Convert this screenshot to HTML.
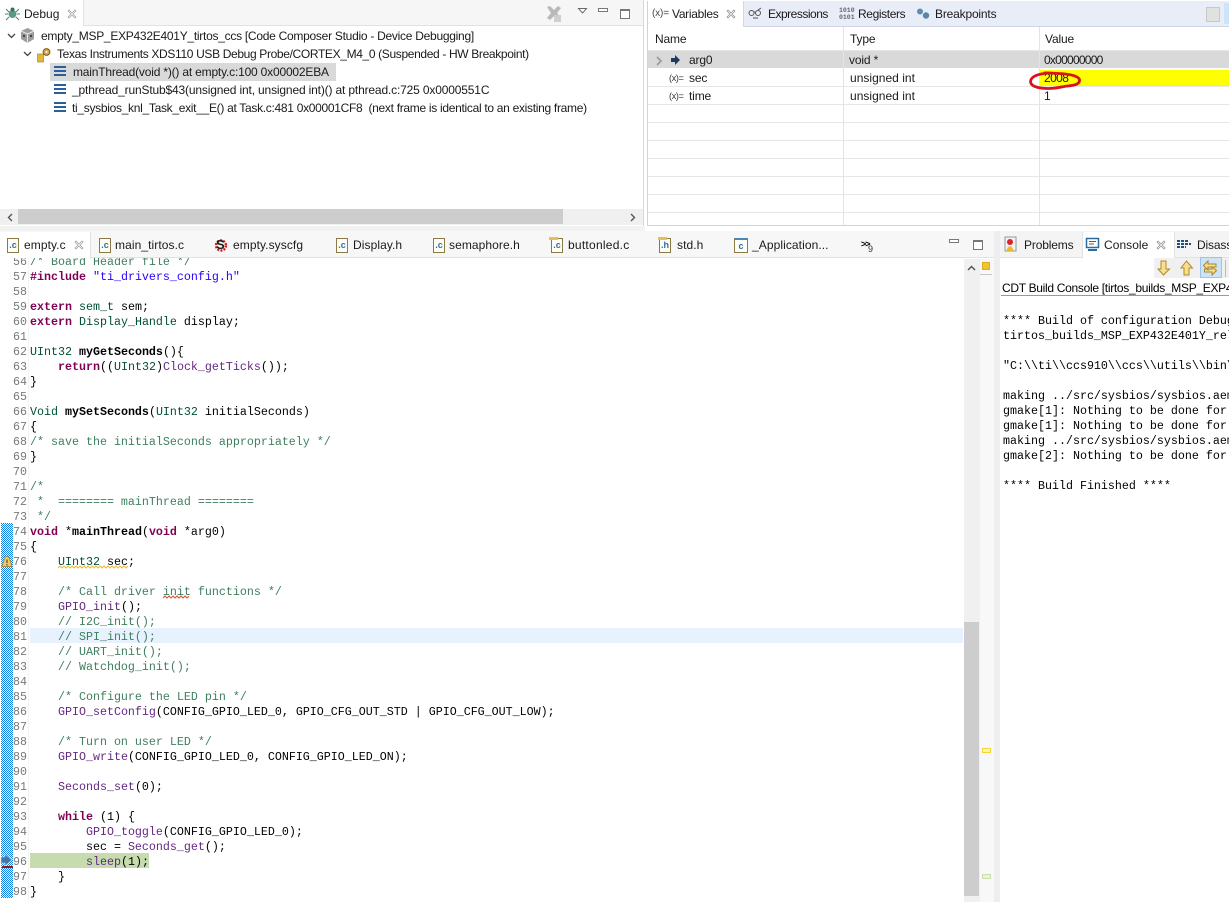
<!DOCTYPE html>
<html><head><meta charset="utf-8"><style>
html,body{margin:0;padding:0;background:#fff}
#r{position:relative;width:1229px;height:902px;overflow:hidden;background:#fff;font-family:"Liberation Sans",sans-serif;font-size:12px;color:#1a1a1a}
.a{position:absolute}
.t{position:absolute;white-space:nowrap;font-size:12px;line-height:16px;letter-spacing:-.15px;color:#1a1a1a}
.g{letter-spacing:.08px}
.m{position:absolute;white-space:pre;font-family:"Liberation Mono",monospace;font-size:11.67px;line-height:15px;color:#000}
.n{position:absolute;left:0;width:27px;text-align:right;white-space:pre;font-family:"Liberation Mono",monospace;font-size:11.67px;line-height:15px;color:#787878}
.c{color:#3f7f5f}.k{color:#7f0055;font-weight:bold}.s{color:#2a00ff}.y{color:#005032}.f{color:#642880}.b{font-weight:bold}
.h{position:absolute;height:1px;background:#e6e6e6}.v{position:absolute;width:1px;background:#e3e3e3}
.fi{position:absolute;width:10px;height:13px;background:#fdfdf5;border:1px solid #8b7a45;color:#2a6fb0;font:bold 9px/13px "Liberation Sans",sans-serif;text-align:center}
svg{position:absolute;overflow:visible}
</style></head><body><div id="r">

<!-- Debug panel -->
<div class="a" style="left:0;top:0;width:643px;height:226px;background:#fff;border-right:1px solid #d8d8d8"></div>
<div class="a" style="left:0;top:0;width:643px;height:25px;background:#f6f6f6;border-bottom:1px solid #e2e2e2"></div>
<div class="a" style="left:0;top:0;width:83px;height:26px;background:#fff;border-right:1px solid #e2e2e2"></div>
<svg style="left:5px;top:6px" width="15" height="15"><circle cx="7.500" cy="8" r="4" fill="#5a9a82"/><circle cx="7.500" cy="3.500" r="2" fill="#3d6d5b"/><path d="M1 3l3 3M14 3l-3 3M0 8h3M12 8h3M1 14l3-3M14 14l-3-3" stroke="#5b7d6d" stroke-width="1" fill="none"/></svg>
<div class="t" style="left:24px;top:6px;letter-spacing:0">Debug</div>
<svg style="left:68px;top:10px" width="9" height="9"><path d="M1 0l3 3 3-3 1 1-3 3 3 3-1 1-3-3-3 3-1-1 3-3-3-3z" fill="#fff" stroke="#9a9a9a" stroke-width=".7"/></svg>
<svg style="left:546px;top:5px" width="16" height="17"><path d="M1 2l3-1 4 4 4-4 3 2-4 5 4 5-3 2-4-4-4 4-3-2 4-5z" fill="#b9b9b9"/><rect x="8" y="10" width="7" height="7" fill="#cfcfcf"/></svg>
<svg style="left:578px;top:8px" width="10" height="7"><path d="M.5.5h8l-4 4.500z" fill="#fff" stroke="#6a6a6a"/></svg>
<div class="a" style="left:598px;top:8px;width:8px;height:2px;border:1px solid #777;background:#fff"></div>
<div class="a" style="left:620px;top:9px;width:8px;height:7px;border:1px solid #777;border-top-width:2px;background:#fff"></div>

<svg style="left:7px;top:33px" width="9" height="6"><path d="M1 1l3.500 3.500L8 1" stroke="#444" stroke-width="1.300" fill="none"/></svg>
<svg style="left:20px;top:28px" width="15" height="15"><path d="M7.500 0l6.500 3v8l-6.500 4L1 11V3z" fill="#9c9c9c"/><path d="M7.500 6v9M1 3l6.500 3L14 3" stroke="#e8e8e8" fill="none"/><circle cx="4" cy="8" r="1.200" fill="#444"/><circle cx="11" cy="8" r="1.200" fill="#444"/></svg>
<div class="t" style="left:41px;top:28px;letter-spacing:-.27px">empty_MSP_EXP432E401Y_tirtos_ccs [Code Composer Studio - Device Debugging]</div>
<svg style="left:23px;top:51px" width="9" height="6"><path d="M1 1l3.500 3.500L8 1" stroke="#444" stroke-width="1.300" fill="none"/></svg>
<svg style="left:37px;top:47px" width="15" height="15"><rect x="0.500" y="7" width="6" height="8" fill="#e2b83a" stroke="#94772a" stroke-width=".6"/><circle cx="9.500" cy="5" r="3.400" fill="#d9a441" stroke="#7a5a1f"/><circle cx="9.500" cy="5" r="1" fill="#fff"/></svg>
<div class="t" style="left:57px;top:46px;letter-spacing:-.35px">Texas Instruments XDS110 USB Debug Probe/CORTEX_M4_0 (Suspended - HW Breakpoint)</div>
<div class="a" style="left:50px;top:63px;width:286px;height:18px;background:#d9d9d9"></div>
<div class="a" style="left:54px;top:66px;width:12px;height:2px;background:#2a6099;box-shadow:0 4px 0 #2a6099,0 8px 0 #2a6099"></div>
<div class="a" style="left:54px;top:84px;width:12px;height:2px;background:#2a6099;box-shadow:0 4px 0 #2a6099,0 8px 0 #2a6099"></div>
<div class="a" style="left:54px;top:102px;width:12px;height:2px;background:#2a6099;box-shadow:0 4px 0 #2a6099,0 8px 0 #2a6099"></div>
<div class="t" style="left:73px;top:64px;letter-spacing:-.19px">mainThread(void *)() at empty.c:100 0x00002EBA</div>
<div class="t" style="left:72px;top:82px;letter-spacing:-.16px">_pthread_runStub$43(unsigned int, unsigned int)() at pthread.c:725 0x0000551C</div>
<div class="t" style="left:72px;top:100px;letter-spacing:-.3px">ti_sysbios_knl_Task_exit__E() at Task.c:481 0x00001CF8&nbsp; (next frame is identical to an existing frame)</div>

<!-- debug scrollbar -->
<div class="a" style="left:0;top:209px;width:643px;height:16px;background:#f0f0f0"></div>
<div class="a" style="left:18px;top:209px;width:545px;height:15px;background:#cdcdcd"></div>
<svg style="left:7px;top:213px" width="7" height="9"><path d="M5 1L1.500 4.500 5 8" stroke="#555" stroke-width="1.400" fill="none"/></svg>
<svg style="left:630px;top:213px" width="7" height="9"><path d="M1 1l3.500 3.500L1 8" stroke="#555" stroke-width="1.400" fill="none"/></svg>
<div class="a" style="left:0;top:226px;width:1229px;height:5px;background:#f2f2f2"></div>

<!-- Variables panel -->
<div class="a" style="left:645px;top:0;width:584px;height:232px;background:#fff"></div>
<div class="a" style="left:647px;top:1px;width:582px;height:25px;background:#e8edf7;border-bottom:1px solid #cfd6e6"></div>
<div class="a" style="left:648px;top:1px;width:95px;height:26px;background:#fff;border-right:1px solid #cfd6e6"></div>
<div class="a" style="left:647px;top:1px;width:1px;height:224px;background:#cfd3de"></div>
<div class="a" style="left:647px;top:225px;width:582px;height:1px;background:#cfd3de"></div>
<div class="t" style="left:652px;top:6px;font-size:10px;color:#444">(x)=</div>
<div class="t" style="left:672px;top:6px;letter-spacing:-.3px">Variables</div>
<svg style="left:727px;top:10px" width="9" height="9"><path d="M1 0l3 3 3-3 1 1-3 3 3 3-1 1-3-3-3 3-1-1 3-3-3-3z" fill="#fff" stroke="#8a8a8a" stroke-width=".7"/></svg>
<svg style="left:748px;top:7px" width="15" height="14"><circle cx="3.500" cy="6" r="2.500" fill="none" stroke="#555"/><circle cx="10" cy="6" r="2.500" fill="none" stroke="#555"/><path d="M6 5h1.500M10 3l3-2M5 11h5" stroke="#555" fill="none"/></svg>
<div class="t" style="left:768px;top:6px;letter-spacing:-.5px">Expressions</div>
<div class="t" style="left:839px;top:7px;font:bold 6.500px/7px 'Liberation Mono',monospace;letter-spacing:0;color:#666">1010<br>0101</div>
<div class="t" style="left:858px;top:6px;letter-spacing:-.38px">Registers</div>
<svg style="left:916px;top:8px" width="14" height="14"><circle cx="4" cy="3.500" r="3" fill="#5d8db0"/><circle cx="10" cy="7.500" r="3.200" fill="#5a87a8"/></svg>
<div class="t" style="left:935px;top:6px;letter-spacing:-.18px">Breakpoints</div>
<div class="a" style="left:1206px;top:7px;width:12px;height:13px;background:#dfe2df;border:1px solid #c8c8c8"></div>
<div class="a" style="left:1224px;top:3px;width:5px;height:21px;background:#cde3f7"></div>

<div class="t" style="left:655px;top:31px">Name</div>
<div class="t" style="left:850px;top:31px">Type</div>
<div class="t" style="left:1045px;top:31px">Value</div>
<div class="a" style="left:648px;top:51px;width:581px;height:17px;background:#d9d9d9"></div>
<div class="a" style="left:1039px;top:70px;width:190px;height:16px;background:#ffff00"></div>
<div class="h" style="left:648px;top:50px;width:581px"></div>
<div class="h" style="left:648px;top:86px;width:581px"></div>
<div class="h" style="left:648px;top:104px;width:581px"></div>
<div class="h" style="left:648px;top:122px;width:581px"></div>
<div class="h" style="left:648px;top:140px;width:581px"></div>
<div class="h" style="left:648px;top:158px;width:581px"></div>
<div class="h" style="left:648px;top:176px;width:581px"></div>
<div class="h" style="left:648px;top:194px;width:581px"></div>
<div class="h" style="left:648px;top:212px;width:581px"></div>
<div class="v" style="left:843px;top:27px;height:198px"></div>
<div class="v" style="left:1039px;top:27px;height:198px"></div>
<svg style="left:656px;top:56px" width="7" height="10"><path d="M1 1l4 4-4 4" stroke="#999" stroke-width="1.600" fill="none"/></svg>
<svg style="left:671px;top:55px" width="10" height="10"><path d="M0 3h4V0l5 5-5 5V7H0z" fill="#1f3a5c"/></svg>
<div class="t" style="left:689px;top:52px">arg0</div>
<div class="t" style="left:849px;top:52px">void *</div>
<div class="t" style="left:1044px;top:52px;letter-spacing:-.75px">0x00000000</div>
<div class="t" style="left:669px;top:70px;font-size:9px;color:#333;letter-spacing:-.3px">(x)=</div>
<div class="t" style="left:689px;top:70px">sec</div>
<div class="t" style="left:850px;top:70px;letter-spacing:.02px">unsigned int</div>
<div class="t" style="left:1044px;top:70px;letter-spacing:-.6px">2008</div>
<div class="t" style="left:669px;top:88px;font-size:9px;color:#333;letter-spacing:-.3px">(x)=</div>
<div class="t" style="left:689px;top:88px">time</div>
<div class="t" style="left:850px;top:88px;letter-spacing:.02px">unsigned int</div>
<div class="t" style="left:1044px;top:88px">1</div>
<svg style="left:1028px;top:70px" width="60" height="22"><path d="M16 3.500C9 4.500 3 7 2.500 11.500c0 4.500 7 7 18 7 9 0 14-2 19-2.500 5-.5 11-1 12-5 1-5-10-7-21-7.500-5 0-10-1-14-.5" fill="none" stroke="#d8121f" stroke-width="2.800" stroke-linecap="round"/></svg>

<!-- Editor tab bar -->
<div class="a" style="left:0;top:231px;width:994px;height:27px;background:#f7f7f7;border-bottom:1px solid #e2e2e2;box-sizing:border-box"></div>
<div class="a" style="left:0;top:232px;width:90px;height:27px;background:#fff;border-right:1px solid #e2e2e2"></div>
<div class="fi" style="left:7px;top:238px">.c</div>
<div class="t g" style="left:24px;top:237px">empty.c</div>
<svg style="left:75px;top:241px" width="9" height="9"><path d="M1 0l3 3 3-3 1 1-3 3 3 3-1 1-3-3-3 3-1-1 3-3-3-3z" fill="#fff" stroke="#9a9a9a" stroke-width=".7"/></svg>
<div class="fi" style="left:99px;top:238px">.c</div>
<div class="t g" style="left:115px;top:237px">main_tirtos.c</div>
<svg style="left:215px;top:238px" width="12" height="15"><circle cx="6" cy="7.500" r="5" fill="none" stroke="#c8201e" stroke-width="2.400" stroke-dasharray="2 1.200"/></svg>
<div class="t" style="left:216px;top:237px;font:bold 13px/16px 'Liberation Sans',sans-serif;color:#1a1a1a;letter-spacing:0">S</div>
<div class="t g" style="left:233px;top:237px">empty.syscfg</div>
<div class="fi" style="left:336px;top:238px">.c</div>
<div class="t g" style="left:353px;top:237px">Display.h</div>
<div class="fi" style="left:433px;top:238px">.c</div>
<div class="t g" style="left:449px;top:237px">semaphore.h</div>
<div class="fi" style="left:551px;top:238px">.c</div>
<div class="a" style="left:549px;top:237px;width:9px;height:3px;background:#e2c05c"></div>
<div class="t g" style="left:568px;top:237px;letter-spacing:.25px">buttonled.c</div>
<div class="fi" style="left:659px;top:238px">.h</div>
<div class="a" style="left:658px;top:237px;width:9px;height:3px;background:#e2c05c"></div>
<div class="t g" style="left:677px;top:237px">std.h</div>
<div class="fi" style="left:734px;top:238px;width:12px;border-top:2px solid #4a86b8;height:12px">c</div>
<div class="t g" style="left:752px;top:237px">_Application...</div>
<div class="t" style="left:861px;top:236px;font-size:9px;font-weight:bold;color:#000;letter-spacing:-1px">&gt;&gt;</div>
<div class="t" style="left:868px;top:241px;font-size:9px;color:#333">9</div>
<div class="a" style="left:949px;top:239px;width:8px;height:2px;border:1px solid #777;background:#fff"></div>
<div class="a" style="left:973px;top:240px;width:8px;height:7px;border:1px solid #777;border-top-width:2px;background:#fff"></div>

<!-- Editor gutter -->
<svg style="left:1px;top:523px" width="12" height="375" shape-rendering="crispEdges"><defs><pattern id="d" width="2" height="2" patternUnits="userSpaceOnUse"><rect width="2" height="2" fill="#fff"/><rect width="1" height="1" fill="#0f82e6"/><rect x="1" y="1" width="1" height="1" fill="#0f82e6"/></pattern></defs><rect width="12" height="375" fill="url(#d)"/></svg>
<div class="a" style="left:28px;top:259px;width:1px;height:643px;background:#f3f3f3"></div>

<!-- highlight lines -->
<div class="a" style="left:30px;top:628px;width:933px;height:15px;background:#e8f2fe"></div>
<div class="a" style="left:30px;top:853px;width:119px;height:15px;background:#c6dbae"></div>

<div class="a" id="code" style="left:0;top:1px;width:963px;height:901px;overflow:hidden;clip-path:inset(257px 0 0 0)">
<div class="n" style="top:254px">56</div><div class="m c" style="left:30px;top:254px">/* Board Header file */</div>
<div class="n" style="top:269px">57</div><div class="m" style="left:30px;top:269px"><span class="k">#include</span> <span class="s">"ti_drivers_config.h"</span></div>
<div class="n" style="top:284px">58</div>
<div class="n" style="top:299px">59</div><div class="m" style="left:30px;top:299px"><span class="k">extern</span> <span class="y">sem_t</span> sem;</div>
<div class="n" style="top:314px">60</div><div class="m" style="left:30px;top:314px"><span class="k">extern</span> <span class="y">Display_Handle</span> display;</div>
<div class="n" style="top:329px">61</div>
<div class="n" style="top:344px">62</div><div class="m" style="left:30px;top:344px"><span class="y">UInt32</span> <span class="b">myGetSeconds</span>(){</div>
<div class="n" style="top:359px">63</div><div class="m" style="left:30px;top:359px">    <span class="k">return</span>((<span class="y">UInt32</span>)<span class="f">Clock_getTicks</span>());</div>
<div class="n" style="top:374px">64</div><div class="m" style="left:30px;top:374px">}</div>
<div class="n" style="top:389px">65</div>
<div class="n" style="top:404px">66</div><div class="m" style="left:30px;top:404px"><span class="y">Void</span> <span class="b">mySetSeconds</span>(<span class="y">UInt32</span> initialSeconds)</div>
<div class="n" style="top:419px">67</div><div class="m" style="left:30px;top:419px">{</div>
<div class="n" style="top:434px">68</div><div class="m c" style="left:30px;top:434px">/* save the initialSeconds appropriately */</div>
<div class="n" style="top:449px">69</div><div class="m" style="left:30px;top:449px">}</div>
<div class="n" style="top:464px">70</div>
<div class="n" style="top:479px">71</div><div class="m c" style="left:30px;top:479px">/*</div>
<div class="n" style="top:494px">72</div><div class="m c" style="left:30px;top:494px"> *  ======== mainThread ========</div>
<div class="n" style="top:509px">73</div><div class="m c" style="left:30px;top:509px"> */</div>
<div class="n" style="top:524px">74</div><div class="m" style="left:30px;top:524px"><span class="k">void</span> *<span class="b">mainThread</span>(<span class="k">void</span> *arg0)</div>
<div class="n" style="top:539px">75</div><div class="m" style="left:30px;top:539px">{</div>
<div class="n" style="top:554px">76</div><div class="m" style="left:30px;top:554px">    <span class="y">UInt32</span> sec;</div>
<div class="n" style="top:569px">77</div>
<div class="n" style="top:584px">78</div><div class="m c" style="left:30px;top:584px">    /* Call driver init functions */</div>
<div class="n" style="top:599px">79</div><div class="m" style="left:30px;top:599px">    <span class="f">GPIO_init</span>();</div>
<div class="n" style="top:614px">80</div><div class="m c" style="left:30px;top:614px">    // I2C_init();</div>
<div class="n" style="top:629px">81</div><div class="m c" style="left:30px;top:629px">    // SPI_init();</div>
<div class="n" style="top:644px">82</div><div class="m c" style="left:30px;top:644px">    // UART_init();</div>
<div class="n" style="top:659px">83</div><div class="m c" style="left:30px;top:659px">    // Watchdog_init();</div>
<div class="n" style="top:674px">84</div>
<div class="n" style="top:689px">85</div><div class="m c" style="left:30px;top:689px">    /* Configure the LED pin */</div>
<div class="n" style="top:704px">86</div><div class="m" style="left:30px;top:704px">    <span class="f">GPIO_setConfig</span>(CONFIG_GPIO_LED_0, GPIO_CFG_OUT_STD | GPIO_CFG_OUT_LOW);</div>
<div class="n" style="top:719px">87</div>
<div class="n" style="top:734px">88</div><div class="m c" style="left:30px;top:734px">    /* Turn on user LED */</div>
<div class="n" style="top:749px">89</div><div class="m" style="left:30px;top:749px">    <span class="f">GPIO_write</span>(CONFIG_GPIO_LED_0, CONFIG_GPIO_LED_ON);</div>
<div class="n" style="top:764px">90</div>
<div class="n" style="top:779px">91</div><div class="m" style="left:30px;top:779px">    <span class="f">Seconds_set</span>(0);</div>
<div class="n" style="top:794px">92</div>
<div class="n" style="top:809px">93</div><div class="m" style="left:30px;top:809px">    <span class="k">while</span> (1) {</div>
<div class="n" style="top:824px">94</div><div class="m" style="left:30px;top:824px">        <span class="f">GPIO_toggle</span>(CONFIG_GPIO_LED_0);</div>
<div class="n" style="top:839px">95</div><div class="m" style="left:30px;top:839px">        sec = <span class="f">Seconds_get</span>();</div>
<div class="n" style="top:854px">96</div><div class="m" style="left:30px;top:854px">        <span class="f">sleep</span>(1);</div>
<div class="n" style="top:869px">97</div><div class="m" style="left:30px;top:869px">    }</div>
<div class="n" style="top:884px">98</div><div class="m" style="left:30px;top:884px">}</div>
</div>

<!-- squiggles -->
<svg style="left:58px;top:566px" width="78" height="3"><path d="M0 2l2-2 2 2 2-2 2 2 2-2 2 2 2-2 2 2 2-2 2 2 2-2 2 2 2-2 2 2 2-2 2 2 2-2 2 2 2-2 2 2 2-2 2 2 2-2 2 2 2-2 2 2 2-2 2 2 2-2 2 2 2-2 2 2 2-2 2 2 2-2" stroke="#e8b931" fill="none"/></svg>
<svg style="left:163px;top:596px" width="30" height="3"><path d="M0 2l2-2 2 2 2-2 2 2 2-2 2 2 2-2 2 2 2-2 2 2 2-2 2 2 2-2" stroke="#d8552a" fill="none"/></svg>
<!-- warning marker -->
<svg style="left:2px;top:556px" width="10" height="11"><path d="M5 .5C7 .5 7.500 2 8 4l2 6.500H0L2 4C2.500 2 3 .5 5 .5z" fill="#f0c864" stroke="#9a7a2a" stroke-width=".8"/><path d="M5 3.500v3.500M5 8v1.500" stroke="#333"/></svg>
<!-- instruction pointer/breakpoint -->
<svg style="left:1px;top:854px" width="13" height="14"><path d="M0 3h4V0l7 6-7 6V9H0z" fill="#3f78ab" stroke="#c9d9ea" stroke-width=".6"/><rect x="1" y="12" width="11" height="2" fill="#8e1c1c"/></svg>

<!-- Editor scrollbar / overview -->
<div class="a" style="left:964px;top:259px;width:16px;height:643px;background:#f0f0f0"></div>
<div class="a" style="left:964px;top:622px;width:15px;height:274px;background:#cdcdcd"></div>
<svg style="left:967px;top:265px" width="9" height="7"><path d="M1 5l3.500-3.500L8 5" stroke="#555" stroke-width="1.500" fill="none"/></svg>
<div class="a" style="left:980px;top:259px;width:14px;height:643px;background:#f8f8f8"></div>
<div class="a" style="left:994px;top:231px;width:6px;height:671px;background:#eee"></div>
<div class="a" style="left:982px;top:262px;width:6px;height:6px;background:#f4c430;border:1px solid #e0ac20"></div>
<div class="a" style="left:982px;top:748px;width:7px;height:3px;background:#fff3b8;border:1px solid #f6d33c"></div>
<div class="a" style="left:982px;top:874px;width:7px;height:3px;background:#e9f2da;border:1px solid #c9dfae"></div>
<div class="a" style="left:980px;top:274px;width:12px;height:1px;background:#c8c8c8"></div>

<!-- Console panel -->
<div class="a" style="left:1000px;top:231px;width:229px;height:27px;background:#f4f4f4;border-bottom:1px solid #e2e2e2;box-sizing:border-box"></div>
<div class="a" style="left:1082px;top:232px;width:91px;height:26px;background:#fff;border-left:1px solid #e2e2e2;border-right:1px solid #e2e2e2"></div>
<svg style="left:1004px;top:237px" width="14" height="16"><rect x="1" y="0" width="11" height="14" fill="#f2f2f2" stroke="#8e9aa8"/><circle cx="6" cy="5" r="3" fill="#d8242a"/><path d="M4 10l3-1 3 5H2z" fill="#e8b931"/></svg>
<div class="t" style="left:1024px;top:237px">Problems</div>
<svg style="left:1086px;top:238px" width="13" height="13"><rect x=".5" y=".5" width="12" height="9" fill="#fff" stroke="#2f6a9e" stroke-width="1.500"/><path d="M3 3.500h7M3 6h5" stroke="#2f6a9e"/><rect x="2" y="11" width="9" height="2" fill="#2f6a9e"/></svg>
<div class="t" style="left:1104px;top:237px;letter-spacing:.05px">Console</div>
<svg style="left:1157px;top:241px" width="9" height="9"><path d="M1 0l3 3 3-3 1 1-3 3 3 3-1 1-3-3-3 3-1-1 3-3-3-3z" fill="#fff" stroke="#8a8a8a" stroke-width=".7"/></svg>
<svg style="left:1177px;top:240px" width="14" height="10"><path d="M0 1h12M0 4h14M0 7h9" stroke="#1f4f86" stroke-width="2" stroke-dasharray="3 1" fill="none"/></svg>
<div class="t" style="left:1197px;top:237px">Disass</div>
<div class="a" style="left:1154px;top:258px;width:75px;height:20px;background:#f0f0f0"></div>
<div class="a" style="left:1200px;top:257px;width:22px;height:21px;background:#cfe3f7;border:1px solid #9cc4ea;box-sizing:border-box"></div>
<svg style="left:1157px;top:260px" width="14" height="17"><path d="M4 1h5v8h3.500L6.500 15 1 9h3z" fill="#f7df8e" stroke="#b0892c"/></svg>
<svg style="left:1180px;top:260px" width="14" height="17"><path d="M4 15h5V8h3.500L6.500 1 1 8h3z" fill="#f7df8e" stroke="#b0892c"/></svg>
<svg style="left:1203px;top:260px" width="15" height="17"><path d="M5 1v3h8v3H5v3L.5 5.500zM9 7v2H1.500v3H9v3l4.500-4.500z" fill="#f7df8e" stroke="#a88530"/></svg>
<div class="a" style="left:1225px;top:260px;width:1px;height:17px;background:#bbb"></div>

<div class="t" style="left:1002px;top:280px;color:#000;letter-spacing:-.3px">CDT Build Console [tirtos_builds_MSP_EXP432E401Y_release_ccs]</div>
<div class="a" style="left:1001px;top:295px;width:228px;height:1px;background:#999"></div>
<div class="a" style="left:1000px;top:296px;width:229px;height:606px;overflow:hidden">
<div class="m" style="left:3px;top:18px">**** Build of configuration Debug for project tirtos_builds</div>
<div class="m" style="left:3px;top:33px">tirtos_builds_MSP_EXP432E401Y_release_ccs ****</div>
<div class="m" style="left:3px;top:63px">"C:\\ti\\ccs910\\ccs\\utils\\bin\\gmake" -k -j 8 all</div>
<div class="m" style="left:3px;top:93px">making ../src/sysbios/sysbios.aem4f ...</div>
<div class="m" style="left:3px;top:108px">gmake[1]: Nothing to be done for 'all'.</div>
<div class="m" style="left:3px;top:123px">gmake[1]: Nothing to be done for 'all'.</div>
<div class="m" style="left:3px;top:138px">making ../src/sysbios/sysbios.aem4f ...</div>
<div class="m" style="left:3px;top:153px">gmake[2]: Nothing to be done for 'all'.</div>
<div class="m" style="left:3px;top:183px">**** Build Finished ****</div>
</div>

</div></body></html>
